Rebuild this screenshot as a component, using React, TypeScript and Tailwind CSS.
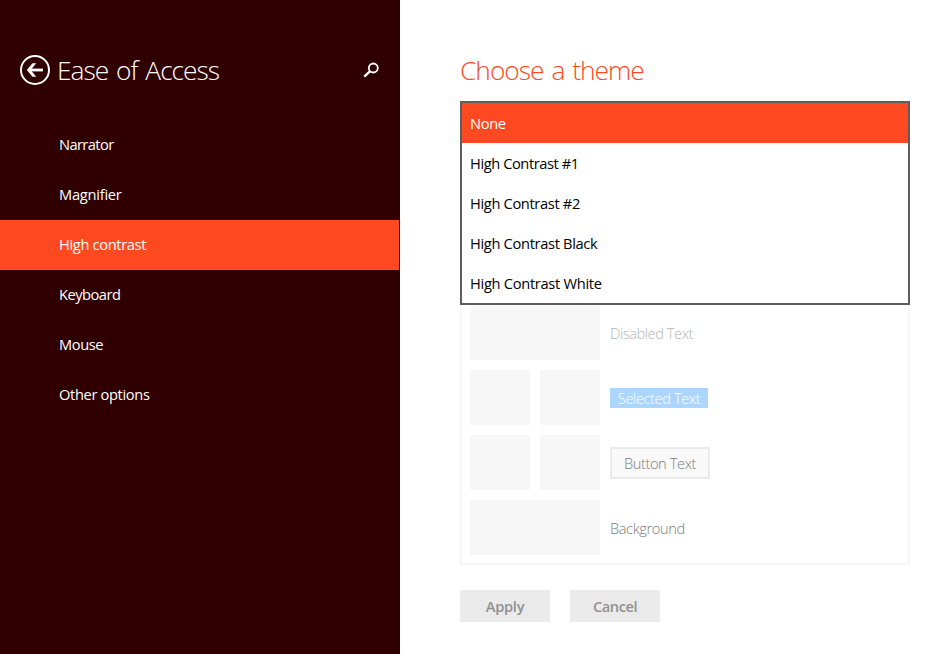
const navItems = [
  { label: 'Narrator', spacing: 'tracking-[-0.6px]' },
  { label: 'Magnifier', spacing: 'tracking-[-0.25px]' },
  { label: 'High contrast', spacing: 'tracking-[-0.35px]', active: true },
  { label: 'Keyboard', spacing: 'tracking-[-0.5px]' },
  { label: 'Mouse', spacing: 'tracking-[-0.4px]' },
  { label: 'Other options', spacing: 'tracking-[-0.35px]' },
];

const themes = [
  { label: 'None', spacing: 'tracking-[-0.35px]', selected: true },
  { label: 'High Contrast #1', spacing: 'tracking-[-0.42px]' },
  { label: 'High Contrast #2', spacing: 'tracking-[-0.35px]' },
  { label: 'High Contrast Black', spacing: 'tracking-[-0.33px]' },
  { label: 'High Contrast White', spacing: 'tracking-[-0.3px]' },
];

function BackIcon() {
  return (
    <svg width="32" height="32" viewBox="0 0 32 32" fill="none" stroke="white">
      <circle cx="16" cy="16" r="14" strokeWidth="2" />
      <path d="M10 16H24" strokeWidth="2.8" />
      <path d="M17.3 9.2h-3.8L7.8 16l5.7 6.8h3.8L11.6 16z" fill="white" stroke="none" />
    </svg>
  );
}

function SearchIcon() {
  return (
    <svg width="16" height="16" viewBox="0 0 16 16" fill="none" stroke="white">
      <circle cx="10.3" cy="6" r="4.5" strokeWidth="1.8" />
      <path d="M7.1 9.2L1.3 14.6" strokeWidth="2.4" />
    </svg>
  );
}

function Swatch({ wide = false }: { wide?: boolean }) {
  return <div className={`h-[55px] bg-[#f7f7f7] ${wide ? 'w-[130px]' : 'w-[60px]'}`} />;
}

export default function App() {
  return (
    <div className="flex h-[654px] w-[930px] overflow-hidden bg-white font-['Open_Sans','Noto_Sans',sans-serif] text-[14.67px] leading-5">
      <aside className="w-[400px] shrink-0 bg-[#300000] text-white">
        <header className="flex h-[120px] items-center pt-5 pl-[19px] pr-[21px]">
          <BackIcon />
          <h1 className="ml-1.5 flex-1 whitespace-nowrap text-[26.3px] font-light leading-9 tracking-[-1.02px] [word-spacing:2.2px]">Ease of Access</h1>
          <SearchIcon />
        </header>
        <nav className="pr-px">
          {navItems.map((item) => (
            <div key={item.label} className={`flex h-[50px] items-center pb-0.5 pl-[59px] ${item.active ? 'bg-[#ff4a21]' : ''}`}>
              <span className={item.spacing}>{item.label}</span>
            </div>
          ))}
        </nav>
      </aside>

      <main className="flex-1 pl-[60px] pr-5">
        <h2 className="flex h-[101px] items-center whitespace-nowrap pt-[39px] text-[26.3px] font-light leading-9 tracking-[-0.97px] text-[#ff4a21] [word-spacing:2px]">Choose a theme</h2>
        <div className="relative h-[464px]">
          <div className="flex h-full flex-col justify-end gap-2.5 border-2 border-[#f7f7f7] p-2 font-light text-[#7c7c7c]">
            <div className="flex items-center gap-2.5">
              <Swatch wide />
              <span className="tracking-[-0.45px] text-[#b5b5b5]">Disabled Text</span>
            </div>
            <div className="flex items-center gap-2.5">
              <Swatch />
              <Swatch />
              <span className="flex h-5 w-[98px] items-center justify-center whitespace-nowrap bg-[#add6ff] tracking-[-0.42px] text-white">Selected Text</span>
            </div>
            <div className="flex items-center gap-2.5">
              <Swatch />
              <Swatch />
              <span className="flex h-8 w-[100px] items-center justify-center whitespace-nowrap border-2 border-[#ebebeb] bg-[#f9f9f9] tracking-[-0.4px]">Button Text</span>
            </div>
            <div className="flex items-center gap-2.5">
              <Swatch wide />
              <span className="tracking-[-0.42px]">Background</span>
            </div>
          </div>
          <div className="absolute inset-x-0 top-0 border-2 border-[#5d5d5d] bg-white text-black">
            {themes.map((theme) => (
              <div key={theme.label} className={`flex h-10 items-center pl-2 ${theme.selected ? 'bg-[#ff4a21] text-white' : ''}`}>
                <span className={theme.spacing}>{theme.label}</span>
              </div>
            ))}
          </div>
        </div>
        <div className="mt-[25px] flex gap-5 font-semibold text-[#919191]">
          <button className="h-8 w-[90px] bg-[#eaeaea] tracking-[-0.3px]">Apply</button>
          <button className="h-8 w-[90px] bg-[#eaeaea] tracking-[-0.45px]">Cancel</button>
        </div>
      </main>
    </div>
  );
}
